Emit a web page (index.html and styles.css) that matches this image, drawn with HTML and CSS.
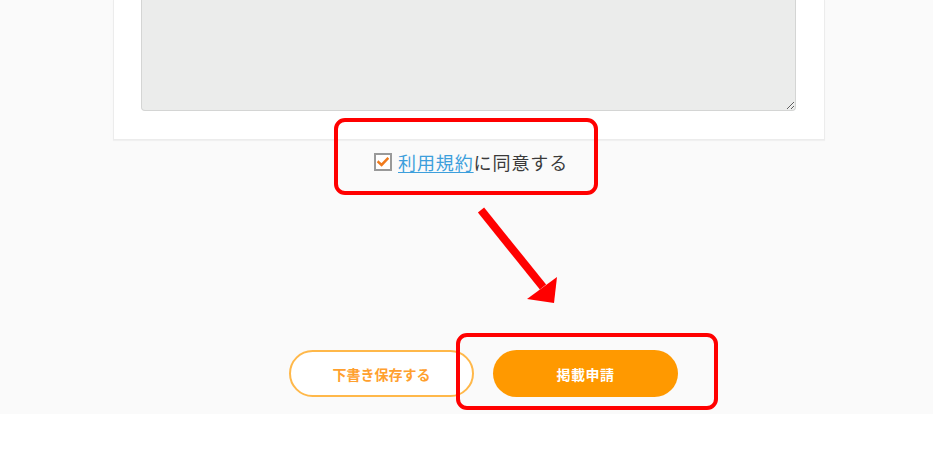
FILE: index.html
```html
<!DOCTYPE html>
<html lang="ja">
<head>
<meta charset="utf-8">
<link rel="stylesheet" href="styles.css">
</head>
<body>
<div class="page">
  <div class="card">
    <textarea class="memo"></textarea>
  </div>
  <label class="agree">
    <span class="checkbox"><svg width="12" height="10" viewBox="0 0 12 10"><path d="M1.5 5.2 L4.6 8 L10.5 1.8" fill="none" stroke="#f07a1c" stroke-width="2.6" stroke-linecap="square"/></svg></span>
    <span class="agree-text"><a href="#" class="terms">利用規約</a>に同意する</span>
  </label>
  <div class="actions">
    <button class="btn btn-draft">下書き保存する</button>
    <button class="btn btn-submit">掲載申請</button>
  </div>
  <div class="mark mark-agree"></div>
  <div class="mark mark-submit"></div>
  <svg class="arrow" width="933" height="414" viewBox="0 0 933 414">
    <line x1="481" y1="210" x2="543" y2="287" stroke="#ff0000" stroke-width="8"/>
    <polygon points="554,303 527,299 557,277" fill="#ff0000"/>
  </svg>
</div>
</body>
</html>
```
FILE: styles.css
```css
* { box-sizing: border-box; }
html, body { margin: 0; padding: 0; background: #ffffff; }
body { font-family: "Noto Sans CJK JP", "Noto Sans", sans-serif; }

.page {
  position: relative;
  height: 414px;
  background: #fafafa;
  overflow: hidden;
}

.card {
  margin-left: 113px;
  width: 712px;
  background: #ffffff;
  border: 1px solid #ececec;
  border-top: none;
  box-shadow: 0 1px 1px rgba(0,0,0,0.04);
  padding: 0 28px 28px 27px;
}

.memo {
  display: block;
  width: 655px;
  height: 111px;
  margin: 0;
  background: #ebeceb;
  border: 1px solid #d4d5d4;
  border-top: none;
  border-radius: 0 0 4px 4px;
  resize: vertical;
  outline: none;
}

.agree {
  display: flex;
  align-items: center;
  margin: 10px 0 0 374px;
  height: 24px;
}

.checkbox {
  width: 18px;
  height: 18px;
  border: 2px solid #999999;
  background: #fff;
  display: flex;
  align-items: center;
  justify-content: center;
  margin-right: 6px;
}

.agree-text {
  font-size: 18px;
  letter-spacing: 0.9px;
  color: #3a3a3a;
  line-height: 24px;
}

.terms {
  color: #3d9fdc;
  text-decoration: underline;
  text-underline-offset: 2px;
}

.actions {
  display: flex;
  gap: 19px;
  margin: 176px 0 0 289px;
}

.btn {
  width: 185px;
  height: 47px;
  border-radius: 24px;
  font-family: "Noto Sans CJK JP", sans-serif;
  font-weight: 700;
  font-size: 14px;
  cursor: pointer;
  padding: 0;
}

.btn-draft {
  background: #ffffff;
  border: 2px solid #ffb84a;
  color: #ffa02e;
}

.btn-submit {
  background: #ff9900;
  border: none;
  color: #ffffff;
  letter-spacing: 0.5px;
}

.mark {
  position: absolute;
  border: 4px solid #ff0000;
  border-radius: 11px;
}

.mark-agree {
  left: 334px;
  top: 118px;
  width: 264px;
  height: 77px;
}

.mark-submit {
  left: 456px;
  top: 333px;
  width: 262px;
  height: 77px;
}

.arrow {
  position: absolute;
  left: 0;
  top: 0;
}
```
